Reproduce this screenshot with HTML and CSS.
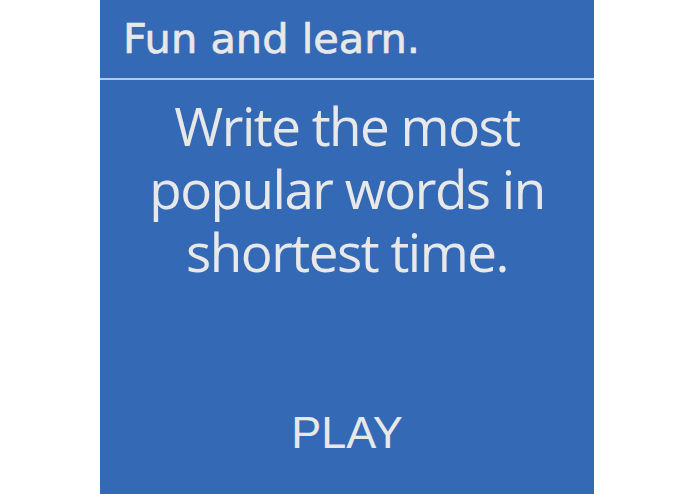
FILE: index.html
```html
<!DOCTYPE html>
<html>
<head>
<meta charset="utf-8">
<link rel="stylesheet" href="styles.css">
</head>
<body>
<div class="panel">
  <div class="header">Fun and learn.</div>
  <div class="desc">
    <div class="line">Write the most</div>
    <div class="line">popular words in</div>
    <div class="line">shortest time.</div>
  </div>
  <div class="play">PLAY</div>
</div>
</body>
</html>
```
FILE: styles.css
```css
html, body {
  margin: 0;
  padding: 0;
  background: #ffffff;
}
.panel {
  margin-left: 100px;
  width: 494px;
  height: 494px;
  background: #3469b5;
  color: #e8e8e8;
  display: flex;
  flex-direction: column;
  overflow: hidden;
}
.header {
  box-sizing: border-box;
  height: 80px;
  border-bottom: 2px solid #b4cbee;
  padding-left: 23px;
  font-family: "DejaVu Sans", sans-serif;
  font-size: 41.5px;
  line-height: 77px;
  -webkit-text-stroke: 0.7px #e8e8e8;
}
.desc {
  margin-top: 14px;
  text-align: center;
  font-family: "Open Sans", sans-serif;
  font-size: 53px;
  letter-spacing: -1.5px;
}
.line {
  height: 63px;
  line-height: 63px;
}
.play {
  margin-top: auto;
  margin-bottom: 36px;
  text-align: center;
  font-family: "Liberation Sans", Arial, sans-serif;
  font-size: 45px;
  line-height: 50px;
}
```
